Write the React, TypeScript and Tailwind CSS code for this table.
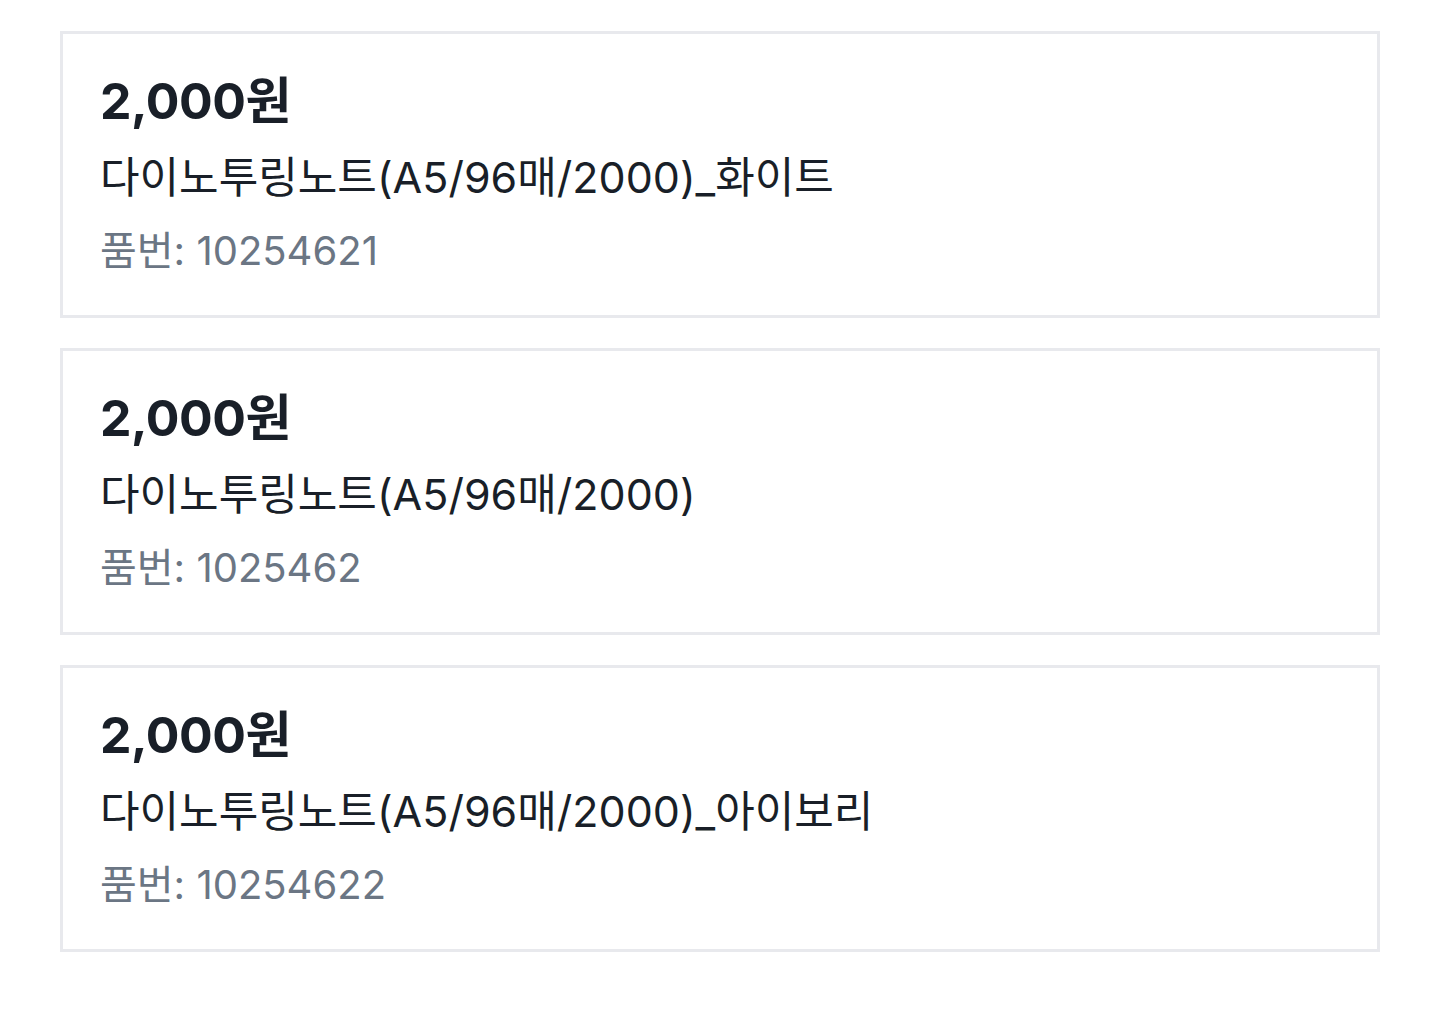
const items = [
  { price: "2,000원", name: "다이노투링노트(A5/96매/2000)_화이트", code: "10254621" },
  { price: "2,000원", name: "다이노투링노트(A5/96매/2000)", code: "1025462" },
  { price: "2,000원", name: "다이노투링노트(A5/96매/2000)_아이보리", code: "10254622" },
];

export default function App() {
  return (
    <div
      className="min-h-screen bg-white px-[60px] pt-[31px]"
      style={{ fontFamily: 'Inter, "Noto Sans CJK KR", sans-serif' }}
    >
      <div className="flex flex-col gap-[30px]">
        {items.map((item) => (
          <div
            key={item.code}
            className="border-[3px] border-[#e8e9ed] bg-white px-[37px] pt-[29px] pb-[27px]"
          >
            <div className="text-[50px] leading-[77px] font-bold tracking-[-0.5px] text-[#191f28]">
              {item.price}
            </div>
            <div className="text-[43px] leading-[74px] font-normal text-[#191f28]">
              {item.name}
            </div>
            <div className="text-[40px] leading-[74px] font-normal text-[#6b7684]">
              품번: {item.code}
            </div>
          </div>
        ))}
      </div>
    </div>
  );
}
